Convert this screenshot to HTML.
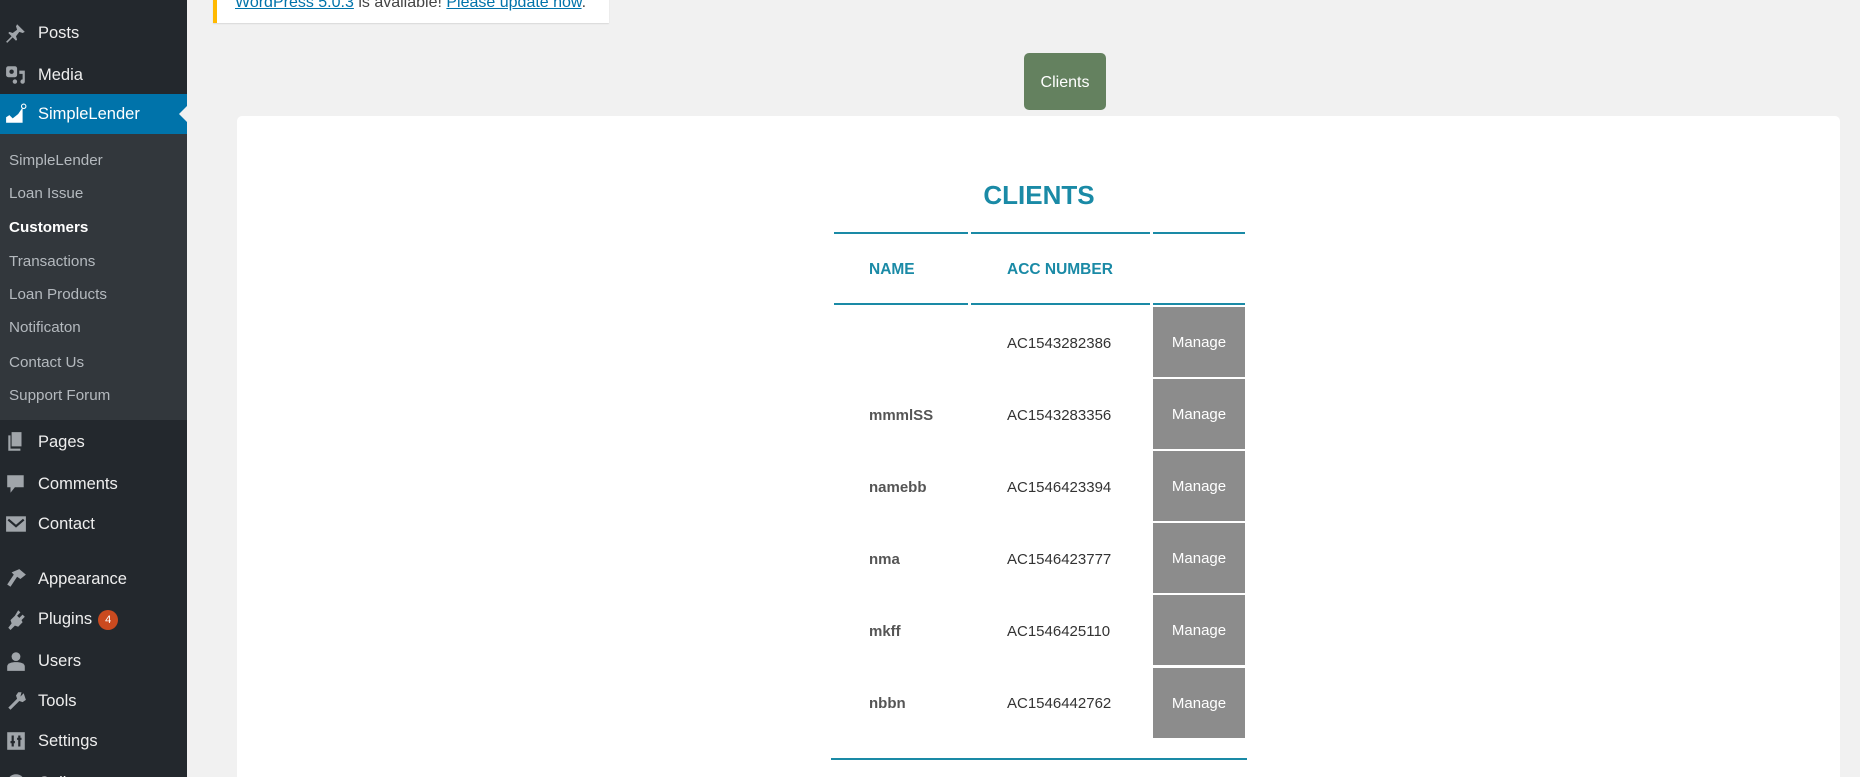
<!DOCTYPE html>
<html style="overflow:hidden;width:1860px;height:777px"><head><meta charset="utf-8"><style>
*{margin:0;padding:0;box-sizing:border-box}
body{width:1860px;height:777px;overflow:hidden;background:#f1f1f1;font-family:"Liberation Sans",sans-serif;position:relative}
#side{position:absolute;left:0;top:0;width:187px;height:777px;background:#23282d;overflow:hidden}
.mi{position:absolute;left:0;width:187px;height:40px;color:#eee;font-size:16.5px;line-height:40px;padding-left:38px}
.ic{position:absolute;left:5px;top:9px;width:22px;height:22px}
#cur{background:#0073aa;top:94px;height:40px;color:#fff}
#cur:after{content:"";position:absolute;right:0;top:12px;border:8px solid transparent;border-right-color:#f1f1f1}
#sub{position:absolute;left:0;top:134px;width:187px;height:286px;background:#32373c}
.si{position:absolute;left:9px;color:#b4b9be;font-size:15.2px;line-height:20px}
.badge{display:inline-block;width:20px;height:20px;border-radius:10px;background:#ca4a1f;color:#fff;font-size:11px;line-height:20px;text-align:center;vertical-align:middle;margin-left:6px}
#notice{position:absolute;left:213px;top:-20px;width:396px;height:43px;background:#fff;border-left:4px solid #ffb900;box-shadow:0 1px 1px rgba(0,0,0,.1);font-size:16px;color:#444;padding:13px 0 0 18px;line-height:20px;white-space:nowrap}
#notice a{color:#0073aa;text-decoration:underline}
#btn{position:absolute;left:1024px;top:53px;width:82px;height:57px;background:#64815f;border-radius:5px;color:#fff;font-size:16px;line-height:59px;text-align:center}
#panel{position:absolute;left:237px;top:116px;width:1603px;height:661px;background:#fff;border-radius:5px 5px 0 0}
.t{position:absolute;color:#1a8aa6;font-weight:bold}
.line{position:absolute;height:2px;background:#1a8aa6}
.nm{position:absolute;left:869px;color:#555;font-size:15px;font-weight:bold;line-height:20px}
.ac{position:absolute;left:1007px;color:#333;font-size:15px;line-height:20px}
.mg{position:absolute;left:1153px;width:92px;height:70px;background:#8c8c8c;color:#fff;font-size:15px;line-height:72px;text-align:center}
</style></head><body>
<div id="side">
<div class="mi" style="top:13px"><svg class="ic" viewBox="0 0 20 20"><path d="M11 2l7 7-2 1-3-1-3 4 1 3-1 1-3-3-5 5-1-1 5-5-3-3 1-1 3 1 4-3-1-3z" fill="#a0a5aa"/></svg>Posts</div>
<div class="mi" style="top:55px"><svg class="ic" viewBox="0 0 20 20"><rect x="1" y="2" width="10" height="10" rx="2" fill="#a0a5aa"/><circle cx="6" cy="7" r="2" fill="#23282d"/><path d="M13 6h5v10a2 2 0 1 1-2-2V9h-3z" fill="#a0a5aa"/><circle cx="9" cy="16" r="2" fill="#a0a5aa"/></svg>Media</div>
<div class="mi" id="cur"><svg class="ic" viewBox="0 0 20 20"><path d="M1 18v-5l3-2 3 3 5-4 4-6v14z" fill="#fff"/><circle cx="17" cy="3" r="2" fill="none" stroke="#fff"/></svg>SimpleLender</div>
<div id="sub">
<div class="si" style="top:17px">SimpleLender</div>
<div class="si" style="top:50px">Loan Issue</div>
<div class="si" style="top:84px;color:#fff;font-weight:bold">Customers</div>
<div class="si" style="top:118px">Transactions</div>
<div class="si" style="top:151px">Loan Products</div>
<div class="si" style="top:184px">Notificaton</div>
<div class="si" style="top:219px">Contact Us</div>
<div class="si" style="top:252px">Support Forum</div>
</div>
<div class="mi" style="top:422px"><svg class="ic" viewBox="0 0 20 20"><path d="M6 1h9v13H6z M3 4h2v12h9v2H3z" fill="#a0a5aa"/></svg>Pages</div>
<div class="mi" style="top:464px"><svg class="ic" viewBox="0 0 20 20"><path d="M2 2h15v11H9l-4 5v-5H2z" fill="#a0a5aa"/></svg>Comments</div>
<div class="mi" style="top:504px"><svg class="ic" viewBox="0 0 20 20"><rect x="1" y="3" width="18" height="14" fill="#a0a5aa"/><path d="M3 6l7 6 7-6" fill="none" stroke="#23282d" stroke-width="2"/></svg>Contact</div>
<div class="mi" style="top:559px"><svg class="ic" viewBox="0 0 20 20"><path d="M13 1l6 5-5 4-3-2-6 9-3-2 6-9-2-2z" fill="#a0a5aa"/></svg>Appearance</div>
<div class="mi" style="top:599px"><svg class="ic" viewBox="0 0 20 20"><path d="M12 2l2 2-3 3 2 2 3-3 2 2-3 3 1 2-4 4-3-1-4 4-2-2 3-4-1-3 4-4z" fill="#a0a5aa"/></svg>Plugins<span class="badge">4</span></div>
<div class="mi" style="top:641px"><svg class="ic" viewBox="0 0 20 20"><circle cx="10" cy="6" r="4" fill="#a0a5aa"/><path d="M2 19v-4c0-3 4-4 8-4s8 1 8 4v4z" fill="#a0a5aa"/></svg>Users</div>
<div class="mi" style="top:681px"><svg class="ic" viewBox="0 0 20 20"><path d="M17 3l-3 3 1-4-3 0-2 3 1 3-8 8 2 2 8-8 3 1 3-2z" fill="#a0a5aa"/></svg>Tools</div>
<div class="mi" style="top:721px"><svg class="ic" viewBox="0 0 20 20"><rect x="2" y="2" width="16" height="16" fill="#a0a5aa"/><path d="M7 5v10M13 5v10M5 11h4M11 8h4" stroke="#23282d" stroke-width="2"/></svg>Settings</div>
<div class="mi" style="top:763px"><svg class="ic" viewBox="0 0 20 20"><circle cx="10" cy="10" r="8" fill="#a0a5aa"/></svg>Collapse</div>
</div>
<div id="notice"><a>WordPress 5.0.3</a> is available! <a>Please update now</a>.</div>
<div id="btn">Clients</div>
<div id="panel"></div>
<div class="t" style="left:937px;top:180px;width:204px;text-align:center;font-size:26px">CLIENTS</div>
<div class="line" style="left:834px;top:232px;width:134px"></div>
<div class="line" style="left:971px;top:232px;width:179px"></div>
<div class="line" style="left:1153px;top:232px;width:92px"></div>
<div class="t" style="left:869px;top:261px;font-size:15.5px">NAME</div>
<div class="t" style="left:1007px;top:261px;font-size:15.5px">ACC NUMBER</div>
<div class="line" style="left:834px;top:303px;width:134px"></div>
<div class="line" style="left:971px;top:303px;width:179px"></div>
<div class="line" style="left:1153px;top:303px;width:92px"></div>
<div class="ac" style="top:334px">AC1543282386</div><div class="mg" style="top:307px">Manage</div>
<div class="nm" style="top:406px">mmmlSS</div><div class="ac" style="top:406px">AC1543283356</div><div class="mg" style="top:379px">Manage</div>
<div class="nm" style="top:478px">namebb</div><div class="ac" style="top:478px">AC1546423394</div><div class="mg" style="top:451px">Manage</div>
<div class="nm" style="top:550px">nma</div><div class="ac" style="top:550px">AC1546423777</div><div class="mg" style="top:523px">Manage</div>
<div class="nm" style="top:622px">mkff</div><div class="ac" style="top:622px">AC1546425110</div><div class="mg" style="top:595px">Manage</div>
<div class="nm" style="top:694px">nbbn</div><div class="ac" style="top:694px">AC1546442762</div><div class="mg" style="top:668px">Manage</div>
<div class="line" style="left:831px;top:758px;width:416px"></div>
</body></html>
